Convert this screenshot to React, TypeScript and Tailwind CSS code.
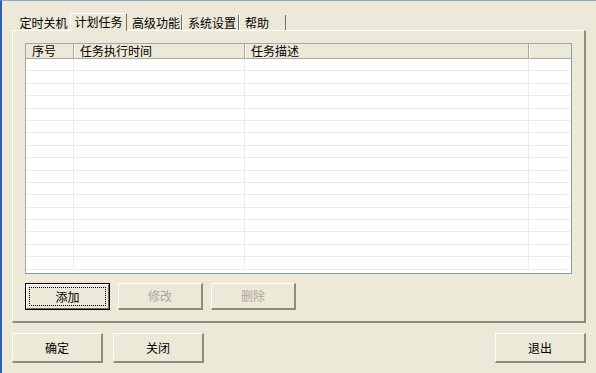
import React from "react";

const rows = Array.from({ length: 17 });

function Btn({
  label,
  w,
  h,
  disabled,
  focused,
}: {
  label: string;
  w: string;
  h: string;
  disabled?: boolean;
  focused?: boolean;
}) {
  if (focused) {
    return (
      <div className={`${w} ${h} border border-black`}>
        <div className="w-full h-full border-t border-l border-t-white border-l-white border-r border-b border-r-[#716F64] border-b-[#716F64] bg-[#ECE9D8] p-[2px]">
          <div className="w-full h-full border border-dotted border-black flex items-center justify-center text-[12px] text-black">
            {label}
          </div>
        </div>
      </div>
    );
  }
  return (
    <div
      className={`${w} ${h} border-t border-l border-t-white border-l-white border-r-2 border-b-2 border-r-[#8D8A7E] border-b-[#8D8A7E] bg-[#ECE9D8] flex items-center justify-center text-[12px] ${
        disabled ? "text-[#ACA899]" : "text-black"
      }`}
    >
      {label}
    </div>
  );
}

export default function App() {
  return (
    <div
      className="w-[596px] h-[373px] bg-[#ECE9D8] border-l-2 border-l-[#2F5FB3] border-t border-t-[#8FA8D8] overflow-hidden flex flex-col"
      style={{ fontFamily: '"Noto Sans CJK SC", "Liberation Sans", sans-serif' }}
    >
      {/* tabs */}
      <div className="h-[29px] flex items-end pl-[15px]">
        <div className="flex items-end h-[18px]">
          <div className="h-[15px] w-[53px] flex items-center justify-center text-[12px] text-black leading-none">
            定时关机
          </div>
          <div className="h-[18px] w-[57px] mb-[-1px] relative z-10 bg-[#ECE9D8] border-t border-l border-t-white border-l-white border-r border-r-[#716F64] flex items-start justify-center pt-[2px] text-[12px] text-black leading-none">
            计划任务
          </div>
          <div className="h-[15px] w-[55px] border-r border-r-[#716F64] flex items-center pl-[5px] text-[12px] text-black leading-none">
            高级功能
          </div>
          <div className="h-[15px] w-[57px] border-r border-r-[#716F64] border-l border-l-white flex items-center pl-[5px] text-[12px] text-black leading-none">
            系统设置
          </div>
          <div className="h-[15px] w-[47px] border-r border-r-[#716F64] border-l border-l-white flex items-center pl-[5px] text-[12px] text-black leading-none">
            帮助
          </div>
        </div>
      </div>

      {/* panel */}
      <div className="ml-[10px] w-[574px] h-[293px] border-t border-l border-t-white border-l-white border-r-2 border-b-2 border-r-[#8D8A7E] border-b-[#8D8A7E] pt-[12px] pl-[12px] flex flex-col">
        {/* list view */}
        <div className="w-[547px] h-[231px] border border-[#7F9DB9] border-t-[#A7A6AA] border-l-[#A7A6AA] bg-white flex flex-col overflow-hidden">
          <div className="flex h-[15px] text-[12px] text-black leading-none shrink-0">
            <div className="w-[48px] border-r border-r-[#ACA899] border-b border-b-[#ACA899] bg-[#ECE9D8] pl-[6px] flex items-center">
              序号
            </div>
            <div className="w-[171px] border-r border-r-[#ACA899] border-l border-l-white border-b border-b-[#ACA899] bg-[#ECE9D8] pl-[5px] flex items-center">
              任务执行时间
            </div>
            <div className="w-[284px] border-r border-r-[#ACA899] border-l border-l-white border-b border-b-[#ACA899] bg-[#ECE9D8] pl-[5px] flex items-center">
              任务描述
            </div>
            <div className="flex-1 border-l border-l-white border-b border-b-[#ACA899] bg-[#ECE9D8]" />
          </div>
          <div className="flex-1 flex flex-col">
            {rows.map((_, i) => (
              <div
                key={i}
                className="flex h-[12.4px] border-b border-b-[#ECECEC] shrink-0"
              >
                <div className="w-[48px] border-r border-r-[#EDEDED]" />
                <div className="w-[171px] border-r border-r-[#EDEDED]" />
                <div className="w-[284px] border-r border-r-[#EDEDED]" />
                <div className="flex-1" />
              </div>
            ))}
          </div>
        </div>

        {/* action buttons */}
        <div className="flex gap-[8px] mt-[9px]">
          <Btn label="添加" w="w-[85px]" h="h-[27px]" focused />
          <Btn label="修改" w="w-[85px]" h="h-[27px]" disabled />
          <Btn label="删除" w="w-[85px]" h="h-[27px]" disabled />
        </div>
      </div>

      {/* bottom buttons */}
      <div className="flex mt-[10px] ml-[10px] w-[574px]">
        <Btn label="确定" w="w-[91px]" h="h-[30px]" />
        <div className="w-[10px]" />
        <Btn label="关闭" w="w-[91px]" h="h-[30px]" />
        <div className="flex-1" />
        <Btn label="退出" w="w-[91px]" h="h-[30px]" />
      </div>
    </div>
  );
}
